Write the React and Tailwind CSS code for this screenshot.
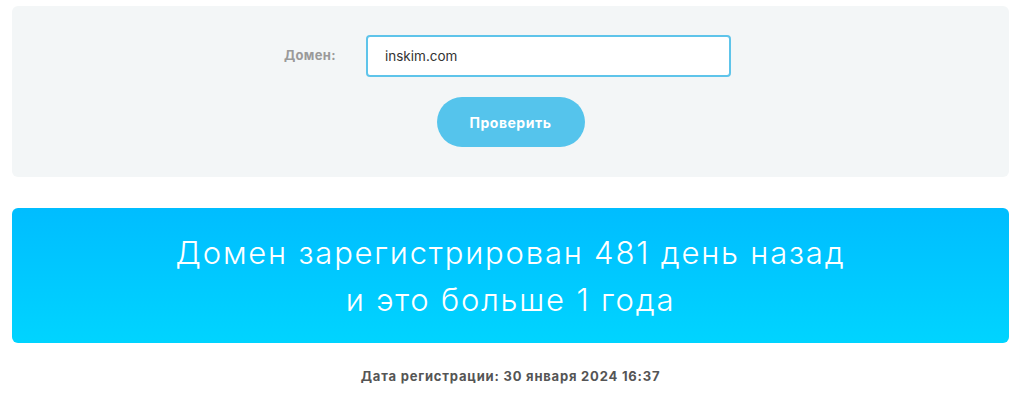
export default function App() {
  return (
    <div className="min-h-screen bg-white px-3 pt-1.5 font-['Inter',sans-serif]">
      <section className="flex h-[171px] flex-col items-center rounded-md bg-[#f3f6f7] pt-[29px]">
        <div className="flex items-center gap-[33px] pr-[6px]">
          <label className="w-[49px] text-[13px] font-bold tracking-[0.3px] text-[#9a9a9a]">
            Домен:
          </label>
          <input
            defaultValue="inskim.com"
            className="h-[42px] w-[365px] rounded-[4px] border-2 border-[#5ec4ea] bg-white px-[17px] text-[13.5px] text-[#333] outline-none"
          />
        </div>
        <button className="mt-5 h-[50px] w-[148px] rounded-full bg-[#55c4ec] text-[14px] font-bold tracking-[0.5px] text-white">
          Проверить
        </button>
      </section>

      <section className="mt-[31px] flex h-[135px] flex-col items-center justify-center rounded-md bg-gradient-to-b from-[#00bdff] to-[#00d4ff] text-center text-[31px] leading-[47px] font-light tracking-[1.8px] text-white">
        <p>Домен зарегистрирован 481 день назад</p>
        <p>и это больше 1 года</p>
      </section>

      <p className="mt-[24px] text-center text-[13px] font-bold tracking-[0.8px] text-[#555]">
        Дата регистрации: 30 января 2024 16:37
      </p>
    </div>
  );
}
